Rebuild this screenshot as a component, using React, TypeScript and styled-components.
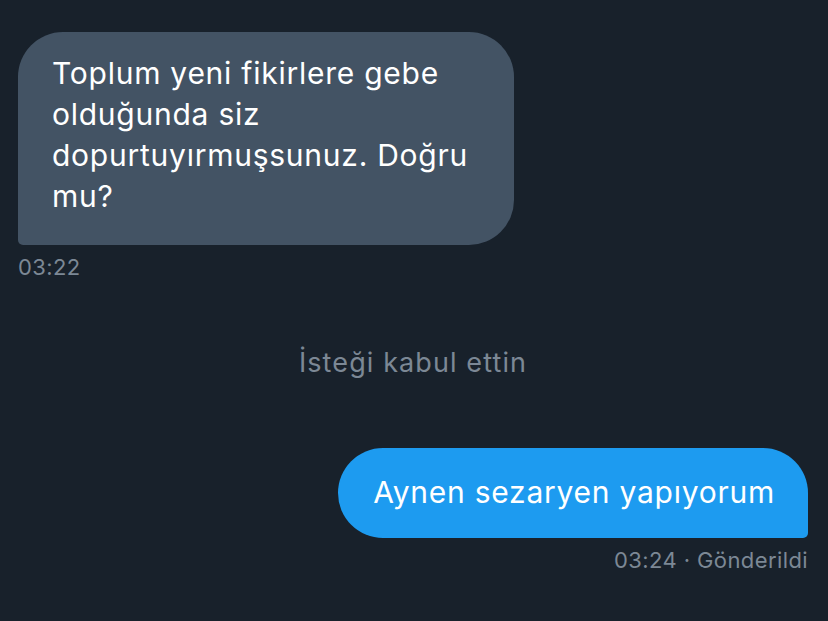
import React from "react";
import styled, { createGlobalStyle } from "styled-components";

const Global = createGlobalStyle`
  html, body { margin: 0; padding: 0; background: #18212b; }
  body { font-family: Inter, "Noto Sans", sans-serif; -webkit-font-smoothing: antialiased; }
`;

const Page = styled.div`
  width: 828px;
  height: 621px;
  box-sizing: border-box;
  background: #18212b;
  padding: 32px 20px 0 18px;
  display: flex;
  flex-direction: column;
  overflow: hidden;
`;

const Row = styled.div<{ $mine?: boolean }>`
  display: flex;
  flex-direction: column;
  align-items: ${(p) => (p.$mine ? "flex-end" : "flex-start")};
`;

const Bubble = styled.div<{ $mine?: boolean }>`
  box-sizing: border-box;
  background: ${(p) => (p.$mine ? "#1d9bf0" : "#435364")};
  color: #ffffff;
  font-size: 30px;
  line-height: 41px;
  letter-spacing: 0.75px;
  border-radius: ${(p) => (p.$mine ? "45px 45px 5px 45px" : "45px 45px 45px 5px")};
  padding: ${(p) => (p.$mine ? "24px 33px 25px 35px" : "21px 34px 28px 34px")};
  width: ${(p) => (p.$mine ? "auto" : "496px")};
`;

const Meta = styled.div`
  margin-top: 10px;
  font-size: 22px;
  line-height: 24px;
  letter-spacing: 0.4px;
  color: #7c8895;
`;

const Notice = styled.div`
  align-self: center;
  margin: 67px 0 68px 0;
  font-size: 27px;
  line-height: 34px;
  letter-spacing: 1.1px;
  color: #7c8895;
`;

export default function App() {
  return (
    <>
      <Global />
      <Page>
        <Row>
          <Bubble>
            Toplum yeni fikirlere gebe
            <br />
            olduğunda siz
            <br />
            dopurtuyırmuşsunuz. Doğru
            <br />
            mu?
          </Bubble>
          <Meta>03:22</Meta>
        </Row>
        <Notice>İsteği kabul ettin</Notice>
        <Row $mine>
          <Bubble $mine>Aynen sezaryen yapıyorum</Bubble>
          <Meta>03:24 · Gönderildi</Meta>
        </Row>
      </Page>
    </>
  );
}
